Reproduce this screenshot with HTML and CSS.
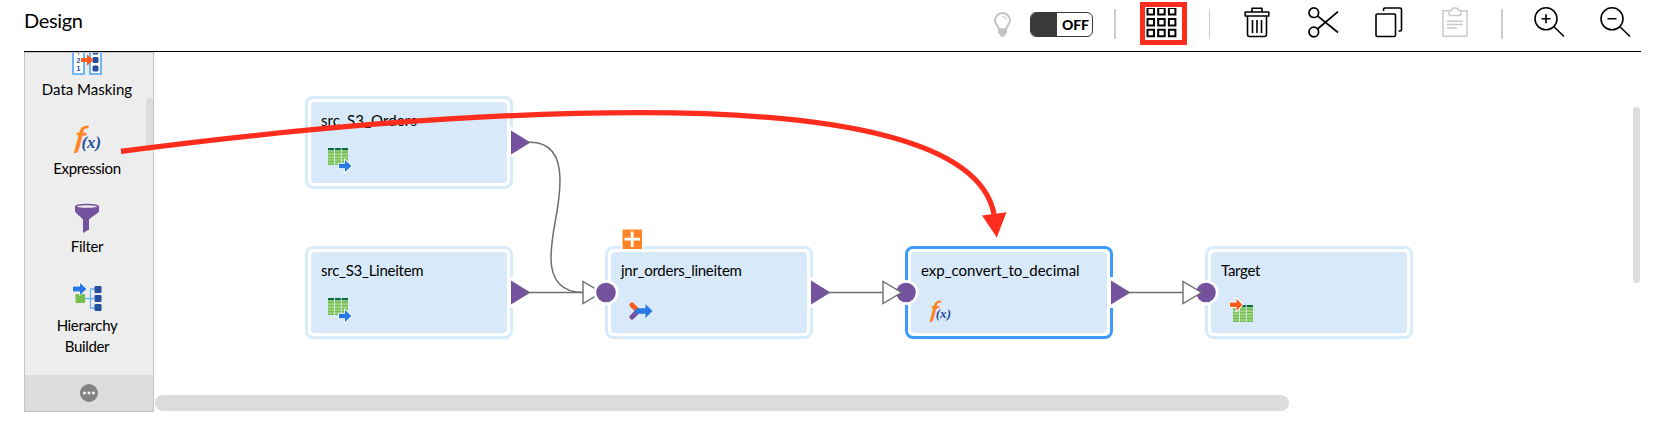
FILE: index.html
```html
<!DOCTYPE html>
<html lang="en">
<head>
<meta charset="utf-8">
<title>Design</title>
<link rel="stylesheet" href="styles.css">
</head>
<body>
<svg class="defs" width="0" height="0">
  <defs>
    <symbol id="grid-table" viewBox="0 0 20 17">
      <path fill="#fff" d="M0 0h20v17H0z"/>
      <path fill="#b5dda0" d="M0 2h20v15H0z"/>
      <path fill="#74bf4b" d="M0 3.2h20v2.3H0zM0 6.8h20v1.8H0zM0 9.8h20v1.8H0zM0 12.6h20v1.8H0zM0 15.4h20V17H0z"/>
      <path fill="#0b6b42" d="M0 0h20v2.2H0z"/>
      <path stroke="#d8ebfa" stroke-width=".9" d="M6.5 0v17M13.3 0v17"/>
    </symbol>
    <symbol id="src" viewBox="0 0 24 24" overflow="visible">
      <use href="#grid-table" width="20" height="17"/>
      <path d="M11 15.800h6v-3.800l6.500 6-6.500 6v-3.800h-6z" fill="#2a78e4" stroke="#fff" stroke-width="1.800" paint-order="stroke"/>
    </symbol>
    <symbol id="tgt" viewBox="0 0 24 24" overflow="visible">
      <use href="#grid-table" x="3" y="7" width="20" height="17"/>
      <path d="M0 4.500h6.500V.8l6 6-6 6V9H0z" fill="#ff5a1f" stroke="#fff" stroke-width="1.800" paint-order="stroke"/>
    </symbol>
    <symbol id="join" viewBox="0 0 24 20">
      <path d="M3 4l5 5" stroke="#ff5a1f" stroke-width="5" stroke-linecap="round"/>
      <path d="M3 16l5-5" stroke="#74529d" stroke-width="5" stroke-linecap="round"/>
      <path d="M5.500 10l2.500-2.700h8.500V3l7 7-7 7v-4.300H8z" fill="#2a78e4"/>
    </symbol>
  </defs>
</svg>

<div class="app">
  <header class="bar">
    <h1 class="title">Design</h1>
    <div class="tools">
      <svg class="bulb" width="19" height="26" viewBox="0 0 19 26"><path d="M6 17.500C6 14 2 12.500 2 8.500a7.500 7.500 0 0 1 15 0C17 12.500 13 14 13 17.500z" fill="none" stroke="#c4c4c4" stroke-width="2"/><path d="M9.500 4.500c2.200 0 3.500 1.300 3.700 3" fill="none" stroke="#c4c4c4" stroke-width="1.200"/><path d="M5 16.500h9v4.500l-2 2c-.5 2.500-4.500 2.500-5 0l-2-2z" fill="#c4c4c4"/></svg>
      <div class="toggle"><span class="knob"></span><span class="state">OFF</span></div>
      <i class="sep sep-a"></i>
      <div class="marked"><svg width="31" height="30" viewBox="0 0 31 30" fill="none" stroke="#000" stroke-width="2"><path d="M1.500 0H8v6.500H1.500zM12.200 0h6.500v6.500h-6.500zM22.900 0h6.500v6.500h-6.500zM1.500 11H8v6.500H1.500zM12.200 11h6.500v6.500h-6.500zM22.900 11h6.500v6.500h-6.500zM1.500 21.700H8v6.500H1.500zM12.200 21.700h6.500v6.500h-6.500zM22.900 21.700h6.500v6.500h-6.500z"/></svg></div>
      <i class="sep sep-b"></i>
      <svg class="trash" width="26" height="31" viewBox="0 0 26 31" fill="none" stroke="#000" stroke-width="1.600" stroke-linejoin="round"><path d="M8 5V1.200h10V5M1.200 5h23.600v4H1.200zM3.500 9v18.500q0 2 2 2h15q2 0 2-2V9M8.500 13v13M13 13v13M17.500 13v13"/></svg>
      <svg class="cut" width="31" height="31" viewBox="0 0 31 31" fill="none" stroke="#000" stroke-width="1.700"><circle cx="5.800" cy="5.700" r="4.800"/><circle cx="5.800" cy="25" r="4.800"/><path d="M9.500 8.800L30 25.500M9.500 22L30 4.700"/></svg>
      <svg class="copy" width="28" height="31" viewBox="0 0 28 31" fill="#fff" stroke="#000" stroke-width="1.600"><path d="M8.500 4V2.500q0-1.500 1.500-1.500h15q1.500 0 1.500 1.500v20q0 1.500-1.500 1.500h-1.500"/><rect x="1" y="7" width="19.500" height="22.500" rx="1.200"/></svg>
      <svg class="paste" width="26" height="31" viewBox="0 0 26 31" fill="none" stroke="#c8c8c8" stroke-width="1.400"><path d="M7 3.700H1v25.500h24V3.700h-6M5 14.200h16M5 17.500h16M5 21h10"/><path d="M7 3.500h2.500Q10 1 12 1h2q2 0 2.500 2.500H19v4l-2 1H9l-2-1z" fill="#fff"/></svg>
      <i class="sep sep-c"></i>
      <svg class="zin" width="31" height="31" viewBox="0 0 31 31" fill="none" stroke="#000" stroke-width="1.600"><circle cx="12" cy="11.800" r="11"/><path d="M20 19.800L30 29.500M7.500 11.800h9M12 7.300v9"/></svg>
      <svg class="zout" width="31" height="31" viewBox="0 0 31 31" fill="none" stroke="#000" stroke-width="1.600"><circle cx="12" cy="11.800" r="11"/><path d="M20 19.800L30 29.500M7.500 11.800h9"/></svg>
    </div>
  </header>

  <main class="work">
    <aside class="palette">
      <ul class="items">
        <li class="item masking">
          <svg width="30" height="22" viewBox="0 8 30 22"><path d="M1 0h11v29H1zM18 0h11v29H18z" fill="#fff" stroke="#4aa5f5" stroke-width="1.600"/><rect x="20.500" y="5" width="6" height="4.500" rx="1.500" fill="#234f9e"/><rect x="20.500" y="12" width="6" height="6" rx="1.500" fill="#234f9e"/><rect x="20.500" y="20.500" width="6" height="6" rx="1.500" fill="#234f9e"/><path d="M6 8.300h1.200v1.200H6z" fill="#234f9e"/><text class="digit" x="4.500" y="17.800">2</text><text class="digit" x="4.500" y="26.300">1</text><path d="M9 13h6V9.500l6.500 5.600-6.500 5.600V17H9z" fill="#ff5a1f"/></svg>
          <span class="t-mask">Data Masking</span>
        </li>
        <li class="item expression">
          <svg width="30" height="31" viewBox="0 0 30 31"><text class="fx-f" transform="translate(1.500 26.500) skewX(-8)">f</text><text class="fx-x" x="9.500" y="26" textLength="19.500" lengthAdjust="spacingAndGlyphs">(x)</text></svg>
          <span class="t-expr">Expression</span>
        </li>
        <li class="item filter">
          <svg width="26" height="31" viewBox="0 0 26 31"><path d="M1 3v5c1 3 5 5 8 8.500V30l6-3.500v-10C18.500 13 24 11 25 8V3z" fill="#74529d"/><ellipse cx="13" cy="3.500" rx="11.300" ry="2" fill="#ededed" stroke="#74529d" stroke-width="1.500"/></svg>
          <span class="t-filt">Filter</span>
        </li>
        <li class="item hierarchy">
          <svg width="30" height="30" viewBox="0 0 30 30"><path d="M13 16.500h9M23 7h-4.500v19H23" fill="none" stroke="#68b4f5" stroke-width="1.300"/><rect x="3.500" y="12" width="9.500" height="9" rx="1" fill="#74bf4b"/><path d="M1 4.500h7V1l6.500 6-6.500 6V9.500H1z" fill="#2a78e4" stroke="#fff" stroke-width="1.200" paint-order="stroke"/><g fill="#234f9e"><rect x="22.500" y="4" width="7" height="7" rx="1.300"/><rect x="22.500" y="13" width="7" height="7" rx="1.300"/><rect x="22.500" y="22" width="7" height="7" rx="1.300"/></g></svg>
          <span class="t-hier">Hierarchy<br>Builder</span>
        </li>
      </ul>
      <span class="palette-thumb"></span>
      <div class="more"><svg width="18" height="18" viewBox="0 0 18 18"><circle cx="9" cy="9" r="9" fill="#838383"/><path d="M3.200 7.700h2.600v2.600H3.200zM7.700 7.700h2.600v2.600H7.700zM12.200 7.700h2.600v2.600h-2.600z" fill="#fff"/></svg></div>
    </aside>

    <section class="canvas">
      <div class="node n-orders"><span class="body"><b class="w-orders">src_S3_Orders</b><svg class="glyph" width="24" height="24"><use href="#src"/></svg></span></div>
      <div class="node n-line"><span class="body"><b class="w-line">src_S3_Lineitem</b><svg class="glyph" width="24" height="24"><use href="#src"/></svg></span></div>
      <div class="node n-join"><span class="body"><b class="w-join">jnr_orders_lineitem</b><svg class="glyph glyph-join" width="24" height="20"><use href="#join"/></svg></span></div>
      <div class="node n-exp selected"><span class="body"><b class="w-exp">exp_convert_to_decimal</b><svg class="glyph glyph-fx" width="24" height="26" viewBox="0 0 30 33"><text class="fx-f" transform="translate(1.500 26.500) skewX(-8)">f</text><text class="fx-x" x="9.500" y="26" textLength="19.500" lengthAdjust="spacingAndGlyphs">(x)</text></svg></span></div>
      <div class="node n-target"><span class="body"><b class="w-target">Target</b><svg class="glyph glyph-tgt" width="24" height="24"><use href="#tgt"/></svg></span></div>
    </section>
    <span class="vthumb"></span>
    <span class="hthumb"></span>
  </main>

  <svg class="links" width="1660" height="434" viewBox="0 0 1660 434">
    <!-- gaps in the node borders behind the ports -->
    <path fill="#fff" d="M508 127h7v30h-7zM508 277h7v31h-7zM808 277h7v31h-7zM1108 277h7v31h-7zM621 228h23v21.500h-23z"/>
    <g fill="#fff"><circle cx="606" cy="292.500" r="12.500"/><circle cx="906" cy="292.500" r="12.500"/><circle cx="1206" cy="292.500" r="12.500"/></g>
    <g fill="#74529d"><path d="M511 130.500v24l19.500-12zM511 280.500v24l19.500-12zM811 280.500v24l19.500-12zM1111 280.500v24l19.500-12z"/></g>
    <g fill="none" stroke="#6d6d6d" stroke-width="1.500">
      <path d="M525 142.300h5c23 0 30 16 30 38 0 30-9 50-9 78 0 23 12 34.200 32 34.200"/>
      <path d="M525 292.500h58M825 292.500h58M1125 292.500h58"/>
    </g>
    <g fill="#fff" stroke="#6d6d6d" stroke-width="1.400"><path d="M583 281.500v22l18.500-11z"/></g>
    <g fill="#fff"><circle cx="606" cy="292.500" r="12.300"/></g>
    <g fill="#74529d"><circle cx="606" cy="292.500" r="9.800"/><circle cx="906" cy="292.500" r="9.800"/><circle cx="1206" cy="292.500" r="9.800"/></g>
    <g fill="#fff" stroke="#6d6d6d" stroke-width="1.400"><path d="M883 281.500v22l18.500-11zM1183 281.500v22l18.500-11z"/></g>
    <path d="M622.500 229.500h19.500v19.500h-19.500z" fill="#ff8427"/><path d="M624.500 239.200h15.500M632.200 231.500v15.500" stroke="#fff" stroke-width="2.800"/>
    <path d="M121 151.300C300 128 480 112.700 640 112.700 840 112.700 980 141 994 214" fill="none" stroke="#ff2d1e" stroke-width="5.200"/>
    <path d="M982 215.500l24.500-3.300-9.700 25.300z" fill="#ff2d1e"/>
  </svg>
</div>
</body>
</html>
```
FILE: styles.css
```css
* { box-sizing: border-box; }
body { margin: 0; background: #fff; color: #000; font-family: Lato, "Open Sans", sans-serif; }
.defs { position: absolute; }
.app { position: relative; width: 1660px; height: 434px; overflow: hidden; }

.bar { display: flex; justify-content: space-between; height: 52px; margin: 0 19px 0 24px; border-bottom: 1px solid #000; }
.title { margin: 0; padding-top: 7px; font-size: 20px; line-height: 26px; font-weight: 400; letter-spacing: -0.35px; }
.tools { display: flex; align-items: flex-start; margin-right: 10px; }
.tools > * { flex: none; }
.bulb { margin-top: 12px; }
.toggle { display: flex; width: 63px; height: 25px; margin: 12px 0 0 18px; border: 1px solid #3a3a3a; border-radius: 6px; overflow: hidden; }
.knob { width: 26px; background: #3a3a3a; }
.state { flex: 1; padding-left: 5px; font-size: 14px; line-height: 24px; font-weight: 900; letter-spacing: -0.2px; }
.sep { width: 2px; height: 30px; margin-top: 9px; background: #ccc; }
.sep-a { margin-left: 21px; }
.marked { width: 47px; height: 43px; margin: 2px 0 0 24px; padding: 1px 0 0 1px; border: 5px solid #ff2d1e; }
.marked svg { display: block; }
.sep-b { width: 1px; margin-left: 22px; }
.trash { margin: 7px 0 0 34px; }
.cut { margin: 7px 0 0 38px; }
.copy { margin: 7px 0 0 36px; }
.paste { margin: 7px 0 0 39px; }
.sep-c { margin-left: 33px; }
.zin { margin: 7px 0 0 31px; }
.zout { margin: 7px 0 0 35px; }

.work { display: flex; position: relative; height: 382px; margin-left: 24px; }
.palette { position: relative; display: flex; flex-direction: column; width: 130px; height: 360px; border: 1px solid #c4c4c4; background: #ededed; }
.items { flex: 1; margin: 0; padding: 0; list-style: none; overflow: hidden; }
.item { display: flex; flex-direction: column; align-items: center; height: 79px; padding-right: 4px; font-size: 15px; line-height: 21px; text-align: center; white-space: nowrap; }
.item svg { display: block; flex: none; overflow: visible; }
.item.masking svg { overflow: hidden; }
.masking { height: 69px; }
.masking span { margin-top: 4px; }
.expression span { margin-top: 5px; letter-spacing: -0.35px; }
.filter { padding-top: 2px; }
.filter svg { height: 31px; }
.filter span { margin-top: 2px; letter-spacing: -0.3px; }
.hierarchy { padding-top: 2px; height: 96px; }
.hierarchy span { margin-top: 3px; letter-spacing: -0.35px; }
.more { display: flex; align-items: center; justify-content: center; height: 36px; background: #dcdcdc; }
.palette-thumb { position: absolute; right: 0; top: 45px; width: 7px; height: 53px; border-radius: 4px; background: #dcdcdc; }
.digit { font: bold 7px "Liberation Sans", sans-serif; fill: #234f9e; }
.fx-f { font: italic 700 32px Lato, sans-serif; fill: #ff8427; }
.fx-x { font: italic 700 17px "Liberation Serif", serif; fill: #234f9e; }

.canvas { position: relative; flex: 1; }
.node { position: absolute; width: 208px; height: 93px; padding: 3px; border: 3px solid #d8ebfb; border-radius: 8px; background: #fff; }
.selected { border-color: #3d9bfb; }
.body { display: flex; flex-direction: column; align-items: flex-start; height: 81px; padding: 8px 0 0 10px; border-radius: 4px; background: #d8eafa; }
.body b { font-size: 15px; line-height: 20px; font-weight: 400; white-space: nowrap; }
.w-orders { letter-spacing: 0.1px; }
.w-line { letter-spacing: -0.25px; }
.w-join, .w-target { letter-spacing: -0.27px; }
.glyph { margin: 18px 0 0 7px; overflow: visible; }
.glyph-join { margin: 21px 0 0 8px; }
.glyph-fx { margin: 18px 0 0 7px; }
.glyph-tgt { margin: 18px 0 0 9px; }
.n-orders { left: 151px; top: 44px; }
.n-line { left: 151px; top: 194px; }
.n-join { left: 451px; top: 194px; }
.n-exp { left: 751px; top: 194px; }
.n-target { left: 1051px; top: 194px; }

.vthumb { position: absolute; left: 1609px; top: 55px; width: 7px; height: 176px; border-radius: 4px; background: #dcdcdc; }
.hthumb { position: absolute; left: 131px; top: 343px; width: 1134px; height: 16px; border-radius: 8px; background: #dcdcdc; }
.links { position: absolute; left: 0; top: 0; pointer-events: none; }
```
